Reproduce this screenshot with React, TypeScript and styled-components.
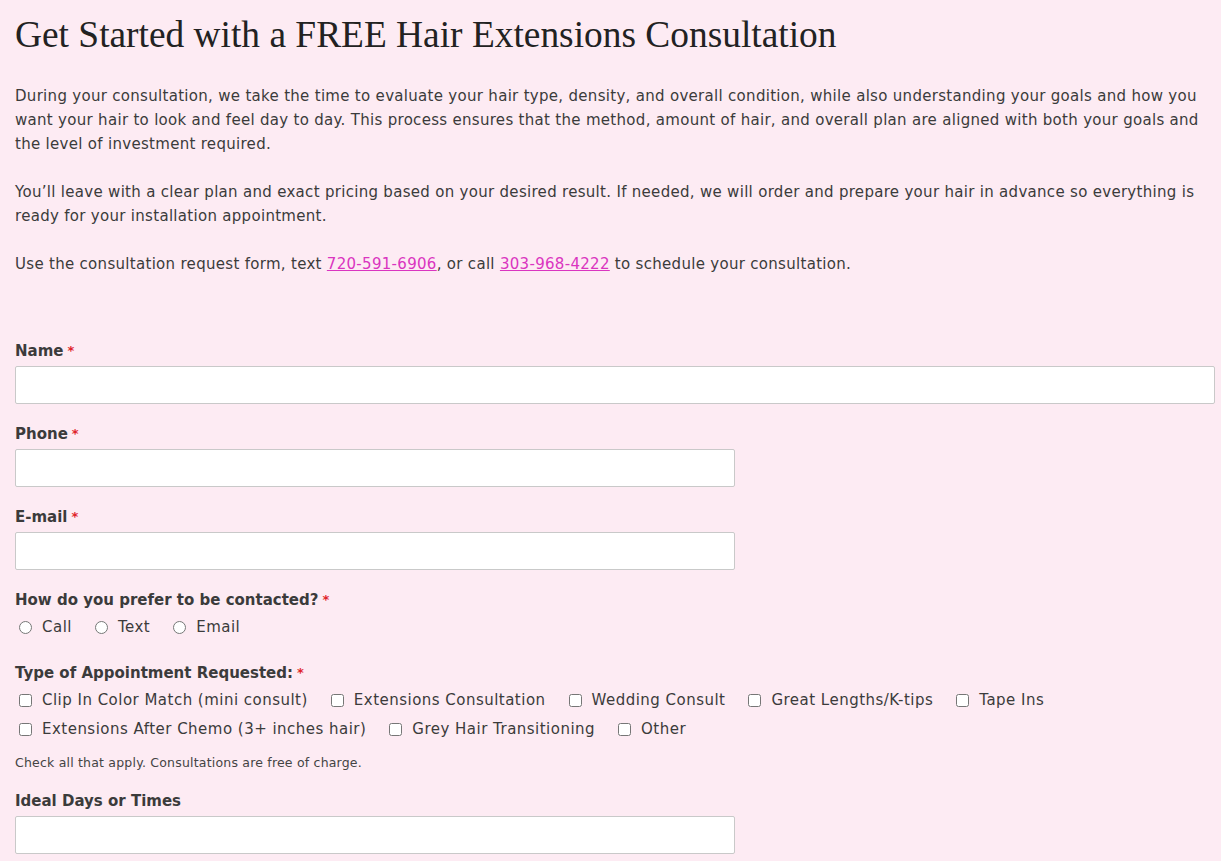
import React from 'react';
import styled, { createGlobalStyle } from 'styled-components';

const GlobalStyle = createGlobalStyle`
  html, body {
    margin: 0;
    padding: 0;
    background: #fdebf3;
  }
  body {
    font-family: 'DejaVu Sans', 'Open Sans', sans-serif;
    color: #3b3b3b;
  }
`;

const Page = styled.div`
  padding: 12px 6px 0 15px;
  min-height: 861px;
  box-sizing: border-box;
`;

const Title = styled.h1`
  font-family: 'Liberation Serif', 'DejaVu Serif', serif;
  font-weight: 400;
  font-size: 37.4px;
  line-height: 46px;
  color: #222;
  margin: 0 0 26px;
`;

const Text = styled.p`
  font-size: 15px;
  line-height: 24px;
  margin: 0 0 24px;
  letter-spacing: 0.3px;
`;

const PhoneLink = styled.a`
  color: #da35c0;
  text-decoration: underline;
`;

const Form = styled.form`
  display: flex;
  flex-direction: column;
  padding-top: 41px;
`;

const Field = styled.div`
  margin-bottom: 20px;
`;

const Label = styled.label`
  display: block;
  font-weight: 700;
  font-size: 15px;
  line-height: 20px;
  margin-bottom: 5px;
`;

const Required = styled.span`
  color: #e0242a;
  font-size: 13px;
  margin-left: 4px;
  vertical-align: top;
`;

const TextInput = styled.input<{ $wide?: boolean }>`
  display: block;
  box-sizing: border-box;
  width: ${p => (p.$wide ? '1200px' : '720px')};
  height: 38px;
  background: #fff;
  border: 1px solid #c9c9c9;
  border-radius: 2px;
  padding: 0 10px;
  font: inherit;
`;

const Choices = styled.div`
  display: flex;
  flex-wrap: wrap;
  row-gap: 5px;
  column-gap: 19px;
  margin-bottom: 4px;
`;

const Choice = styled.label`
  display: inline-flex;
  align-items: center;
  font-size: 15px;
  line-height: 24px;
  letter-spacing: 0.48px;
  input {
    margin: 0 10px 0 4px;
    width: 13px;
    height: 13px;
  }
`;

const Hint = styled.div`
  font-size: 12.5px;
  line-height: 16px;
  letter-spacing: 0.2px;
  color: #444;
  margin-top: 14px;
`;

const contactWays = ['Call', 'Text', 'Email'];

const appointmentTypes = [
  'Clip In Color Match (mini consult)',
  'Extensions Consultation',
  'Wedding Consult',
  'Great Lengths/K-tips',
  'Tape Ins',
  'Extensions After Chemo (3+ inches hair)',
  'Grey Hair Transitioning',
  'Other',
];

export default function App() {
  return (
    <Page>
      <GlobalStyle />
      <Title>Get Started with a FREE Hair Extensions Consultation</Title>
      <Text>
        During your consultation, we take the time to evaluate your hair type, density, and overall condition, while
        also understanding your goals and how you want your hair to look and feel day to day. This process ensures
        that the method, amount of hair, and overall plan are aligned with both your goals and the level of
        investment required.
      </Text>
      <Text>
        You’ll leave with a clear plan and exact pricing based on your desired result. If needed, we will order and
        prepare your hair in advance so everything is ready for your installation appointment.
      </Text>
      <Text>
        Use the consultation request form, text <PhoneLink href="#">720-591-6906</PhoneLink>, or call{' '}
        <PhoneLink href="#">303-968-4222</PhoneLink> to schedule your consultation.
      </Text>

      <Form onSubmit={e => e.preventDefault()}>
        <Field>
          <Label>
            Name<Required>*</Required>
          </Label>
          <TextInput $wide />
        </Field>
        <Field>
          <Label>
            Phone<Required>*</Required>
          </Label>
          <TextInput />
        </Field>
        <Field>
          <Label>
            E-mail<Required>*</Required>
          </Label>
          <TextInput />
        </Field>
        <Field>
          <Label>
            How do you prefer to be contacted?<Required>*</Required>
          </Label>
          <Choices>
            {contactWays.map(w => (
              <Choice key={w}>
                <input type="radio" name="contact" />
                {w}
              </Choice>
            ))}
          </Choices>
        </Field>
        <Field>
          <Label>
            Type of Appointment Requested:<Required>*</Required>
          </Label>
          <Choices>
            {appointmentTypes.map(t => (
              <Choice key={t}>
                <input type="checkbox" />
                {t}
              </Choice>
            ))}
          </Choices>
          <Hint>Check all that apply. Consultations are free of charge.</Hint>
        </Field>
        <Field>
          <Label>Ideal Days or Times</Label>
          <TextInput />
        </Field>
      </Form>
    </Page>
  );
}
